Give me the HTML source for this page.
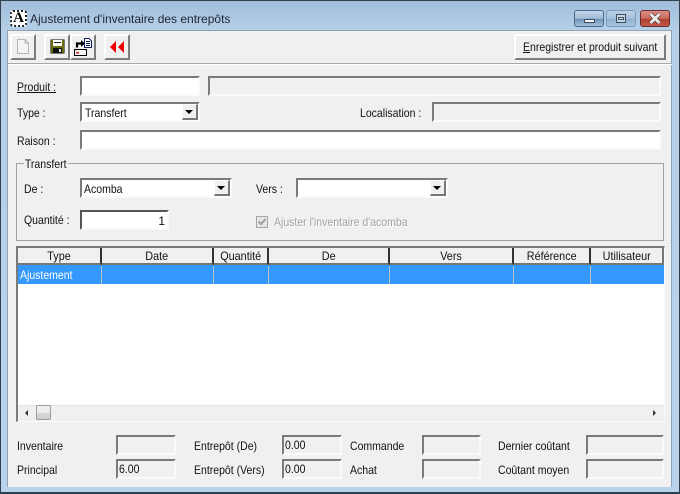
<!DOCTYPE html>
<html><head><meta charset="utf-8"><style>
html,body{margin:0;padding:0;background:#fff}
#w{position:relative;width:680px;height:494px;overflow:hidden;font:12px "Liberation Sans",sans-serif;color:#111;background:linear-gradient(180deg,#9fbcd9 0,#b5cfe8 30px,#b9d3ec 494px)}
#w div,#w span.a{position:absolute;box-sizing:border-box}
.t{white-space:nowrap;line-height:14px;height:14px;transform:scaleX(.875);transform-origin:0 50%}
.f{border-top:2px solid #7a7a7a;border-left:2px solid #7a7a7a;border-bottom:2px solid #fafafa;border-right:2px solid #fafafa;background:#fff}
.r{background:#f0f0f0}
.b{background:#f0f0f0;border-top:2px solid #fff;border-left:2px solid #fff;border-right:2px solid #7c7c7c;border-bottom:2px solid #7c7c7c}
.dd{width:16px;height:16px;background:#f0f0f0;border-top:1px solid #fff;border-left:1px solid #fff;border-right:2px solid #777;border-bottom:2px solid #777}
.dd:after{content:"";position:absolute;left:2px;top:5px;border-left:4px solid transparent;border-right:4px solid transparent;border-top:4px solid #000}
.h{top:248px;height:17px;text-align:center;line-height:17px;white-space:nowrap;background:#f0f0f0;border-right:2px solid #333;border-bottom:2px solid #777}
.h span{display:inline-block;transform:scaleX(.9)}
.v{top:266px;height:18px;width:1px;background:#b8c4d2}
</style></head><body><div id="w">
<div style="left:0;top:0;width:680px;height:1px;background:#33414f"></div>
<div style="left:0;top:0;width:1px;height:494px;background:#33414f"></div>
<div style="left:679px;top:0;width:1px;height:494px;background:#33414f"></div>
<div style="left:0;top:492px;width:680px;height:2px;background:#2a3f50"></div>
<div style="left:7px;top:30px;width:665px;height:457px;background:#f0f0f0;border:1px solid #8fa3b5;border-width:1px 1px 0 1px"></div>

<div style="left:10px;top:10px;width:17px;height:17px;background:#fff;border:2px dotted #222;border-radius:3px;font:bold 15px/13px 'Liberation Serif',serif;text-align:center;color:#000">A</div>
<div class="t" style="left:30px;top:12px;color:#1c2430;font-size:12px;transform:none">Ajustement d'inventaire des entrepôts</div>

<div style="left:574px;top:10px;width:30px;height:17px;border:1px solid #4d6a8a;border-radius:3px;background:linear-gradient(180deg,#c4d6ea 0,#a0bcd8 50%,#6f93b8 55%,#a2c0dc 100%)"></div>
<div style="left:584px;top:19px;width:11px;height:4px;background:#f4f4f4;border:1px solid #3e4f63"></div>
<div style="left:606px;top:10px;width:30px;height:17px;border:1px solid #7d9ab8;border-radius:3px;background:linear-gradient(180deg,#bad0e6 0,#a6c1dc 50%,#8fb0cf 55%,#a8c6e0 100%)"></div>
<div style="left:616px;top:14px;width:10px;height:9px;border:1px solid #3e4f63;background:#c5d4e3"></div>
<div style="left:618px;top:17px;width:6px;height:3px;background:#d8e2ec;border:1px solid #3e4f63"></div>
<div style="left:640px;top:10px;width:30px;height:17px;border:1px solid #6d2c2c;border-radius:3px;background:linear-gradient(180deg,#dc8f86 0,#c96a5e 50%,#b0402f 55%,#c25a4c 100%)"></div>
<svg style="position:absolute;left:648px;top:12px" width="14" height="13" viewBox="0 0 14 13"><path d="M2.5 2 L11.5 11 M11.5 2 L2.5 11" stroke="#5a3a3a" stroke-width="4.4"/><path d="M2.5 2 L11.5 11 M11.5 2 L2.5 11" stroke="#e8e8e8" stroke-width="3"/></svg>

<div class="b" style="left:10px;top:34px;width:26px;height:26px"></div>
<svg style="position:absolute;left:16px;top:38px" width="14" height="17" viewBox="0 0 14 17"><path d="M1.5 1.5H9L12.5 5V15.5H1.5Z M9 1.5V5H12.5" fill="#f4f4f4" stroke="#b5b5b5"/></svg>
<div class="b" style="left:44px;top:34px;width:26px;height:26px"></div>
<svg style="position:absolute;left:50px;top:39px" width="15" height="15" viewBox="0 0 15 15"><path d="M0.5 0.5H14.5V14.5H0.5Z" fill="#000"/><rect x="1" y="1" width="13" height="13" fill="#6b6b12"/><rect x="3" y="1" width="9" height="6" fill="#fff"/><rect x="4" y="3" width="7" height="1" fill="#222"/><rect x="3" y="9" width="9" height="5" fill="#111"/><rect x="9" y="10" width="2" height="3" fill="#ddd"/></svg>
<div class="b" style="left:70px;top:34px;width:26px;height:26px"></div>
<svg style="position:absolute;left:73px;top:38px" width="20" height="19" viewBox="0 0 20 19"><path d="M4 9.5V5.5H9" fill="none" stroke="#000" stroke-width="2.2"/><path d="M8 2L12 5.5L8 9Z" fill="#000"/><path d="M11.5 0.5H16L18.5 3V9.5H11.5Z" fill="#fff" stroke="#102060"/><path d="M13 3.5H17M13 5.5H17M13 7.5H17" stroke="#102060"/><rect x="1.5" y="11.5" width="12" height="6" fill="#f2f2f2" stroke="#000"/><rect x="3" y="14" width="3" height="1.5" fill="#d22"/></svg>
<div class="b" style="left:104px;top:34px;width:26px;height:26px"></div>
<svg style="position:absolute;left:109px;top:41px" width="16" height="12" viewBox="0 0 16 12"><path d="M7 0V12L1 6Z M15 0V12L9 6Z" fill="#ee0000"/></svg>
<div class="b" style="left:514px;top:34px;width:152px;height:26px"></div>
<div class="t" style="left:523px;top:40px"><span style="text-decoration:underline">E</span>nregistrer et produit suivant</div>
<div style="left:8px;top:63px;width:664px;height:1px;background:#a8a8a8"></div>
<div style="left:8px;top:64px;width:664px;height:1px;background:#fff"></div>

<div class="t" style="left:17px;top:80px;text-decoration:underline">Produit :</div>
<div class="f" style="left:80px;top:76px;width:120px;height:20px"></div>
<div class="f r" style="left:208px;top:76px;width:453px;height:20px"></div>
<div class="t" style="left:17px;top:106px">Type :</div>
<div class="f" style="left:80px;top:102px;width:120px;height:20px"><div class="t" style="left:3px;top:2px">Transfert</div><div class="dd" style="right:0;top:0"></div></div>
<div class="t" style="left:360px;top:106px">Localisation :</div>
<div class="f r" style="left:432px;top:102px;width:229px;height:20px"></div>
<div class="t" style="left:17px;top:134px">Raison :</div>
<div class="f" style="left:80px;top:130px;width:581px;height:20px"></div>

<div style="left:16px;top:163px;width:648px;height:78px;border:1px solid #a0a0a0"></div>
<div class="t" style="left:24px;top:157px;background:#f0f0f0;padding:0 1px">Transfert</div>
<div class="t" style="left:24px;top:182px">De :</div>
<div class="f" style="left:80px;top:178px;width:152px;height:20px"><div class="t" style="left:2px;top:2px">Acomba</div><div class="dd" style="right:0;top:0"></div></div>
<div class="t" style="left:256px;top:182px">Vers :</div>
<div class="f" style="left:296px;top:178px;width:152px;height:20px"><div class="dd" style="right:0;top:0"></div></div>
<div class="t" style="left:24px;top:213px">Quantité :</div>
<div class="f" style="left:80px;top:210px;width:89px;height:20px;border-top-color:#555;border-left-color:#555"><div class="t" style="right:2px;top:2px;transform:none">1</div></div>
<div style="left:256px;top:216px;width:12px;height:12px;background:#e6e6e6;border:1px solid #a5a5a5"></div>
<svg style="position:absolute;left:257px;top:217px" width="10" height="10" viewBox="0 0 10 10"><path d="M1.5 4.5L4 7L8.5 2" fill="none" stroke="#a0a0a0" stroke-width="2"/></svg>
<div class="t" style="left:274px;top:215px;color:#a0a0a0;text-shadow:1px 1px 0 #fff">Ajuster l'inventaire d'acomba</div>

<div style="left:16px;top:246px;width:649px;height:176px;background:#fff;border-top:2px solid #7a7a7a;border-left:2px solid #7a7a7a;border-right:1px solid #fafafa;border-bottom:1px solid #fafafa"></div>
<div class="h" style="left:18px;width:84px"><span>Type</span></div>
<div class="h" style="left:102px;width:112px"><span>Date</span></div>
<div class="h" style="left:214px;width:55px"><span>Quantité</span></div>
<div class="h" style="left:269px;width:121px"><span>De</span></div>
<div class="h" style="left:390px;width:124px"><span>Vers</span></div>
<div class="h" style="left:514px;width:77px"><span>Référence</span></div>
<div class="h" style="left:591px;width:73px;border-right-color:#777"><span>Utilisateur</span></div>
<div style="left:18px;top:265px;width:646px;height:19px;background:#3399ff"></div>
<div class="t" style="left:20px;top:268px;color:#fff">Ajustement</div>
<div class="v" style="left:101px"></div><div class="v" style="left:213px"></div><div class="v" style="left:268px"></div><div class="v" style="left:389px"></div><div class="v" style="left:513px"></div><div class="v" style="left:590px"></div>

<div style="left:18px;top:405px;width:646px;height:16px;background:#f0f0f0;border-top:1px solid #e4e4e4"></div>
<div style="left:25px;top:410px;border-top:3px solid transparent;border-bottom:3px solid transparent;border-right:3px solid #333;width:0;height:6px"></div>
<div style="left:36px;top:405px;width:15px;height:15px;background:linear-gradient(180deg,#f2f2f2 0,#ebebeb 50%,#d8d8d8 55%,#cfcfcf 100%);border:1px solid #9c9c9c;border-radius:2px"></div>
<div style="left:653px;top:410px;border-top:3px solid transparent;border-bottom:3px solid transparent;border-left:3px solid #333;width:0;height:6px"></div>

<div class="t" style="left:17px;top:439px">Inventaire</div>
<div class="f r" style="left:116px;top:435px;width:60px;height:20px"></div>
<div class="t" style="left:17px;top:463px">Principal</div>
<div class="f r" style="left:116px;top:459px;width:60px;height:20px"><div class="t" style="left:1px;top:1px">6.00</div></div>
<div class="t" style="left:194px;top:439px">Entrepôt (De)</div>
<div class="f r" style="left:282px;top:435px;width:60px;height:20px"><div class="t" style="left:1px;top:1px">0.00</div></div>
<div class="t" style="left:194px;top:463px">Entrepôt (Vers)</div>
<div class="f r" style="left:282px;top:459px;width:60px;height:20px"><div class="t" style="left:1px;top:1px">0.00</div></div>
<div class="t" style="left:350px;top:439px">Commande</div>
<div class="f r" style="left:422px;top:435px;width:59px;height:20px"></div>
<div class="t" style="left:350px;top:463px">Achat</div>
<div class="f r" style="left:422px;top:459px;width:59px;height:20px"></div>
<div class="t" style="left:498px;top:439px">Dernier coûtant</div>
<div class="f r" style="left:586px;top:435px;width:78px;height:20px"></div>
<div class="t" style="left:498px;top:463px">Coûtant moyen</div>
<div class="f r" style="left:586px;top:459px;width:78px;height:20px"></div>
</div></body></html>
